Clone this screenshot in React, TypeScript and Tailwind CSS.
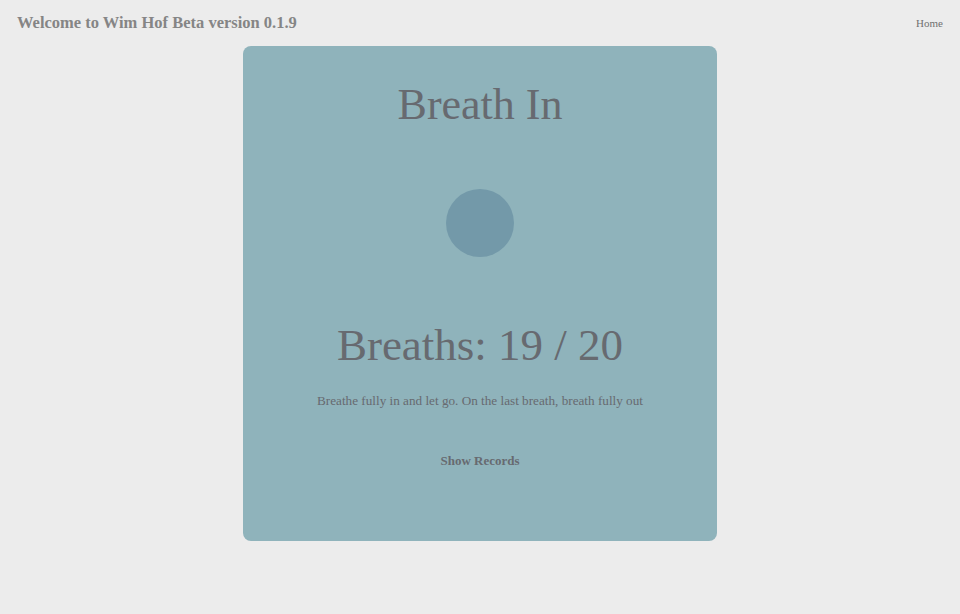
export default function App() {
  const breaths = 19;
  const total = 20;

  return (
    <div className="min-h-[614px] w-full bg-[#ececec] font-['Liberation_Serif',serif]">
      <header className="flex h-[46px] items-center justify-between px-[17px]">
        <h1 className="text-[16.5px] font-bold text-[#858585]">Welcome to Wim Hof Beta version 0.1.9</h1>
        <a className="text-[11px] text-[#707070]">Home</a>
      </header>

      <main className="mx-auto flex h-[495px] w-[474px] flex-col items-center rounded-[8px] bg-[#8fb3bb] pt-[33px] text-[#676a70]">
        <h2 className="text-[44px] leading-[52px]">Breath In</h2>
        <div className="mt-[58px] h-[68px] w-[68px] rounded-full bg-[#7399a9]" />
        <p className="mt-[62px] text-[45px] leading-[52px]">
          Breaths: {breaths} / {total}
        </p>
        <p className="mt-[21px] text-[13.2px] leading-[18px]">
          Breathe fully in and let go. On the last breath, breath fully out
        </p>
        <button className="mt-[42px] text-[13px] font-bold leading-[18px] text-[#676a70]">Show Records</button>
      </main>
    </div>
  );
}
